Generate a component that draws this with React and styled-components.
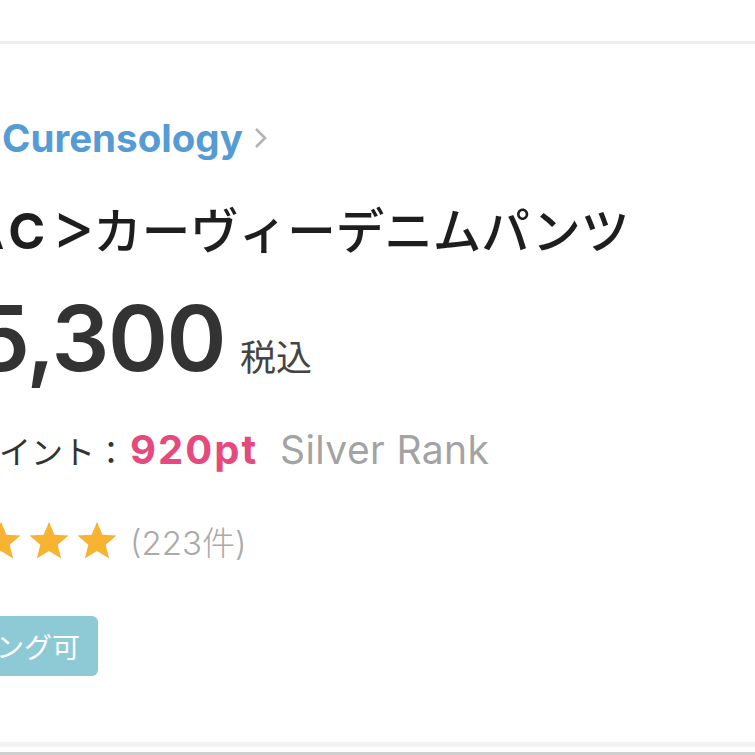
import React from 'react';
import styled, { createGlobalStyle } from 'styled-components';

const GlobalStyle = createGlobalStyle`
  html, body {
    margin: 0;
    padding: 0;
    background: #ffffff;
    overflow: hidden;
  }
  body {
    font-family: Inter, "Noto Sans CJK JP", sans-serif;
    color: #222;
  }
`;

const Page = styled.div`
  width: 755px;
  height: 755px;
  display: flex;
  flex-direction: column;
  overflow: hidden;
  background: #fff;
`;

const TopBar = styled.div`
  height: 41px;
  flex-shrink: 0;
  border-bottom: 3px solid #eeeeee;
`;

const Detail = styled.section`
  flex: 1;
  display: flex;
  flex-direction: column;
  padding-top: 70px;
`;

// the screenshot is cropped on the left, so each line starts a bit off-screen
const Row = styled.div`
  display: flex;
  align-items: ${(p) => p.$align || 'center'};
  margin-left: ${(p) => p.$shift || 0}px;
  margin-top: ${(p) => p.$gap || 0}px;
  height: ${(p) => p.$h}px;
  white-space: nowrap;
`;

const Brand = styled.a`
  font-size: 38.5px;
  font-weight: 700;
  color: #559bd4;
  line-height: 48px;
  text-decoration: none;
`;

const Chevron = styled.svg`
  margin-left: 11px;
  width: 14px;
  height: 24px;
`;

const Title = styled.h1`
  margin: 0;
  font-size: 48.5px;
  font-weight: 500;
  line-height: 60px;
  color: #1e1e1e;
`;

const Series = styled.b`
  font-size: 50px;
  font-weight: 700;
  letter-spacing: 6px;
`;

const Sep = styled.span`
  display: inline-block;
  width: 42px;
  text-align: center;
  font-family: Inter, sans-serif;
  font-size: 66px;
  font-weight: 400;
  line-height: 0;
  vertical-align: 0;
`;

const Price = styled.div`
  font-family: Inter, sans-serif;
  font-size: 91px;
  font-weight: 600;
  line-height: 100px;
  color: #333;
  letter-spacing: -1.5px;
`;

const Tax = styled.span`
  margin-left: 15px;
  font-family: "Noto Sans CJK JP", sans-serif;
  font-size: 36px;
  color: #444;
`;

const PointLabel = styled.span`
  font-family: "Noto Sans CJK JP", sans-serif;
  font-size: 32px;
  color: #333;
`;

const PointValue = styled.span`
  margin-left: 3px;
  font-size: 40px;
  font-weight: 700;
  color: #e6497d;
  letter-spacing: 2px;
`;

const Rank = styled.span`
  margin-left: 22px;
  font-size: 39px;
  color: #a3a3a3;
  letter-spacing: 0.4px;
`;

const Stars = styled.div`
  display: flex;
  gap: 6px;
`;

const Star = styled.svg`
  width: 42px;
  height: 40px;
  fill: #f6b432;
`;

const ReviewCount = styled.span`
  margin-left: 12px;
  font-size: 33px;
  color: #aaaaaa;
  font-weight: 300;
`;

const Tag = styled.span`
  display: inline-flex;
  align-items: center;
  height: 60px;
  padding: 0 18px 0 20px;
  border-radius: 6px;
  background: #8ecad6;
  color: #fff;
  font-family: "Noto Sans CJK JP", sans-serif;
  font-size: 28px;
`;

const Footer = styled.div`
  margin-top: auto;
  height: 13px;
  flex-shrink: 0;
  border-top: 5px solid #f3f3f3;
  border-bottom: 3px solid #cfcfcf;
  box-sizing: border-box;
`;

const StarIcon = () => (
  <Star viewBox="0 0 24 23">
    <polygon points="12,0.5 15.1,7.9 23.2,8.4 17,13.6 19,21.6 12,17.2 5,21.6 7,13.6 0.8,8.4 8.9,7.9" />
  </Star>
);

export default function App() {
  return (
    <Page>
      <GlobalStyle />
      <TopBar />
      <Detail>
        <Row $h={48} $shift={2}>
          <Brand href="#">Curensology</Brand>
          <Chevron viewBox="0 0 14 24">
            <polyline points="2,3 11,12 2,21" fill="none" stroke="#b3b3b3" strokeWidth="2.6" />
          </Chevron>
        </Row>
        <Row $h={60} $gap={39} $shift={-33}>
          <Title>
            <Series>AC</Series>
            <Sep>&gt;</Sep>カーヴィーデニムパンツ
          </Title>
        </Row>
        <Row $h={100} $gap={27} $shift={-77} $align="baseline">
          <Price>¥5,300</Price>
          <Tax>税込</Tax>
        </Row>
        <Row $h={50} $gap={37} $shift={-33} $align="baseline">
          <PointLabel>ポイント：</PointLabel>
          <PointValue>920pt</PointValue>
          <Rank>Silver Rank</Rank>
        </Row>
        <Row $h={50} $gap={41} $shift={-116}>
          <Stars>
            {[0, 1, 2, 3, 4].map((i) => (
              <StarIcon key={i} />
            ))}
          </Stars>
          <ReviewCount>(223件)</ReviewCount>
        </Row>
        <Row $h={60} $gap={50} $shift={-108}>
          <Tag>ラッピング可</Tag>
        </Row>
        <Footer />
      </Detail>
    </Page>
  );
}
